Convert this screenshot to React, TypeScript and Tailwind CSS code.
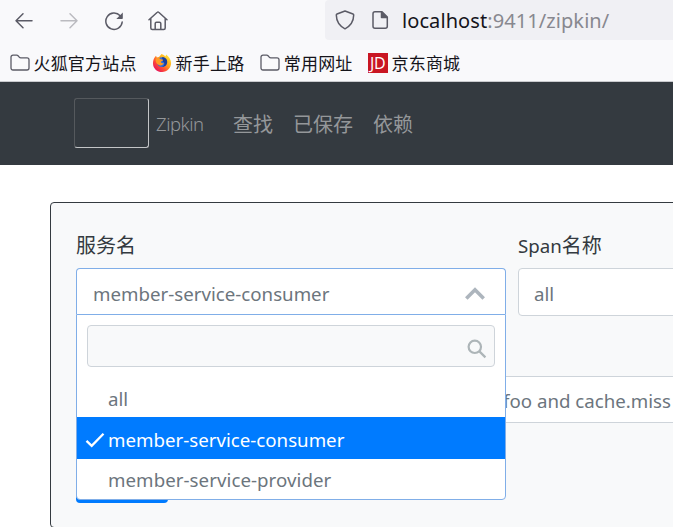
import type { ReactNode } from "react";

const ui = "font-['Noto_Sans','Noto_Sans_CJK_SC',sans-serif]";

function Folder() {
  return (
    <svg className="h-[18px] w-5 shrink-0" viewBox="0 0 20 18" fill="none" stroke="#5b5b66" strokeWidth="1.3" strokeLinejoin="round">
      <path d="M1 14V3.2C1 2 1.8 1.2 3 1.2h3.6c.7 0 1.200.3 1.700.8l1 1.200c.4.4.8.6 1.400.6h6.300c1.200 0 2 .8 2 2V14c0 1.200-.8 2-2 2H3c-1.200 0-2-.8-2-2Z" />
    </svg>
  );
}

function Firefox() {
  return (
    <svg className="size-5 shrink-0" viewBox="0 0 20 20">
      <defs>
        <linearGradient id="flame" x1="0.9" y1="0.1" x2="0.15" y2="0.9">
          <stop offset="0" stopColor="#ffe83b" />
          <stop offset="0.4" stopColor="#ffa21a" />
          <stop offset="0.7" stopColor="#ff4a35" />
          <stop offset="1" stopColor="#e5155f" />
        </linearGradient>
      </defs>
      <path fill="url(#flame)" d="M2.600 4.600 4 2.800l.8 1.600 2.200-.5 2.500-3c1.600.4 3 1.300 4 2.500l.6-1.900c2.700 1.900 5 5 5 8.600 0 5-4 8.900-9 8.900S1 15.300 1 10.400c0-2.200.5-4.200 1.600-5.800Z" />
      <circle cx="10" cy="9.200" r="4.900" fill="#2d6fdd" />
      <path fill="#1b3f9c" d="M10 4.300c2.800-.8 5.600 1.700 5.200 5.300-.3 2.600-2.600 4.500-5.200 4.400 3.200-1.500 3-4.600.8-5.400Z" />
      <path fill="#ff9a24" d="M3.800 5.400c2-.9 3.800-.5 4.800.8l2.500.5c-.2 1-1.400 1.500-2.200 1.900-.2 1.500 1.300 2 3.100 1.500-1 2.500-4 3-6 1.500-1.800-1.400-2.800-3.800-2.200-6.200Z" />
    </svg>
  );
}

function Bookmark({ icon, children, className = "" }: { icon: ReactNode; children: ReactNode; className?: string }) {
  return (
    <div className={`flex items-center gap-1 whitespace-nowrap ${className}`}>
      {icon}
      <span className="pt-0.5 tracking-[0.18px]">{children}</span>
    </div>
  );
}

function BrowserChrome() {
  return (
    <header className="h-[82px] shrink-0 border-b border-[#c9cace] bg-[#f9f9fb] text-[#15141a]">
      <div className="flex h-10">
        <div className="flex w-[325px] shrink-0 gap-[25px] pt-[11px] pl-[14px]">
          <svg className="size-5" viewBox="0 0 20 20" fill="none" stroke="#5b5b66" strokeWidth="1.500" strokeLinecap="round" strokeLinejoin="round">
            <path d="M18 9.800H2M9 2.800l-7 7 7 7" />
          </svg>
          <svg className="size-5" viewBox="0 0 20 20" fill="none" stroke="#bbbbc0" strokeWidth="1.500" strokeLinecap="round" strokeLinejoin="round">
            <path d="M2 9.800h16M11 2.800l7 7-7 7" />
          </svg>
          <svg className="size-5" viewBox="0 0 20 20" fill="none" stroke="#5b5b66" strokeWidth="1.500" strokeLinecap="round">
            <path d="M16.200 4.800A8.200 8.200 0 1 0 18.200 11" />
            <path fill="#5b5b66" stroke="none" d="M18.800 1.400v5.800c0 .5-.3.8-.8.8h-5.700Z" />
          </svg>
          <svg className="-ml-px size-5" viewBox="0 0 20 20" fill="none" stroke="#5b5b66" strokeWidth="1.500" strokeLinecap="round" strokeLinejoin="round">
            <path d="M1 8.800 9.300 1.200c.4-.4 1-.4 1.400 0L19 8.800M2.800 7.500V17c0 .9.600 1.500 1.500 1.500h11.400c.9 0 1.500-.6 1.500-1.500V7.500M7.200 18.500v-6c0-.8.500-1.300 1.300-1.300h3c.8 0 1.300.5 1.300 1.300v6" />
          </svg>
        </div>
        <div className="flex h-10 flex-1 items-center rounded-l bg-[#f0f0f4] pl-2.5">
          <svg className="size-5 shrink-0" viewBox="0 0 20 20" fill="none" stroke="#5b5b66" strokeWidth="1.500" strokeLinejoin="round">
            <path d="M10 1 18 4c.5.2.7.5.7 1-.1 6-2.700 10.700-8.700 13.800C4 15.700 1.400 11 1.300 5c0-.5.200-.8.700-1Z" />
          </svg>
          <svg className="ml-[15px] size-5 shrink-0" viewBox="0 0 20 20" fill="none" stroke="#5b5b66" strokeWidth="1.500" strokeLinejoin="round">
            <path d="M12 1.800H5c-1.200 0-2 .8-2 2v12.400c0 1.200.8 2 2 2h10.300c1.200 0 2-.8 2-2V7Z" />
            <path d="M11.500 2v5.500H17Z" fill="#5b5b66" />
          </svg>
          <span className="ml-3 pt-0.5 text-[20px] leading-[26px] tracking-[0.080px] whitespace-nowrap">
            localhost<span className="text-[#88888f]">:9411/zipkin/</span>
          </span>
        </div>
      </div>
      <nav className="flex h-[41px] items-center pt-[4px] pl-[9.500px] text-[17px]">
        <Bookmark icon={<Folder />}>火狐官方站点</Bookmark>
        <Bookmark icon={<Firefox />} className="ml-[15px]">新手上路</Bookmark>
        <Bookmark icon={<Folder />} className="ml-[15.500px]">常用网址</Bookmark>
        <Bookmark
          className="ml-[15px]"
          icon={
            <span className="flex size-5 items-center justify-center bg-[#c91623] font-['Open_Sans',sans-serif] text-[16px] leading-5 font-medium tracking-[-0.5px] text-white">
              JD
            </span>
          }
        >
          京东商城
        </Bookmark>
      </nav>
    </header>
  );
}

function NavBar() {
  return (
    <nav className="flex h-[83px] shrink-0 items-center bg-[#343a40] pl-[74px] text-[20px] leading-[30px] text-[#94979a]">
      <div className="mb-0.5 h-[50px] w-[75px] shrink-0 rounded-[3px] border border-t-[#55595d] border-r-[#c3c5c7] border-b-[#c3c5c7] border-l-[#55595d]" />
      <span className="ml-[7px] w-[77px] text-[18.500px] font-light tracking-[-0.5px]">Zipkin</span>
      <div className="flex gap-5 pt-[3px]">
        <span>查找</span>
        <span>已保存</span>
        <span>依赖</span>
      </div>
    </nav>
  );
}

function ServiceMenu() {
  return (
    <div className="absolute top-full -left-px w-[430px] rounded-b border border-[#80aee8] bg-white">
      <div className="mx-2.5 mt-[10px] flex h-[42px] items-center justify-end rounded border border-[#ced4da] bg-[#f8f9fa] pr-[7px]">
        <svg className="mt-[6px] size-5" viewBox="0 0 20 20" fill="none" stroke="#adb5b8" strokeWidth="2.200">
          <circle cx="7.800" cy="7.800" r="6.200" />
          <path d="m12.400 12.400 6 6" />
        </svg>
      </div>
      <ul className="mt-[9px]">
        <li className="flex h-[41px] items-center pt-[5px] pl-[31px]">all</li>
        <li className="flex h-[42px] items-center bg-[#007bff] pt-[4px] pl-2 text-white">
          <svg className="mr-[3px] h-4 w-5" viewBox="0 0 20 16" fill="none" stroke="white" strokeWidth="2.300">
            <path d="m1.500 8.800 5.200 5L18.500 1.800" />
          </svg>
          member-service-consumer
        </li>
        <li className="flex h-[40px] items-center pt-[3px] pl-[31px] tracking-[0.050px]">member-service-provider</li>
      </ul>
    </div>
  );
}

export default function App() {
  return (
    <div className={`flex h-[527px] w-[673px] flex-col overflow-hidden bg-white ${ui}`}>
      <BrowserChrome />
      <NavBar />
      <main className="mt-[37px] ml-[50px] h-[326px] w-[700px] shrink-0 rounded border border-[#343a40] bg-[#f8f9fa] pt-[27px] pl-[25px] text-[18.700px] text-[#6c757d]">
        <div className="flex gap-3">
          <div className="w-[430px] shrink-0">
            <div className="mb-2 h-[30px] pt-px text-[20px] leading-[30px] text-[#343a40]">服务名</div>
            <div className="relative z-10 flex h-[46px] items-center justify-between rounded-t border border-b-0 border-[#80aee8] bg-white pt-[5px] pr-5 pl-4">
              <span>member-service-consumer</span>
              <svg className="h-5 w-5" viewBox="0 0 20 20" fill="none" stroke="#adb5bd" strokeWidth="3.600">
                <path d="m1.300 14.500 8.700-8.700 8.700 8.700" />
              </svg>
              <ServiceMenu />
            </div>
          </div>
          <div className="w-[250px] shrink-0">
            <div className="mb-2 h-[30px] pt-px text-[20px] leading-[30px] text-[#343a40]">
              <span className="text-[18.700px]">Span</span>名称
            </div>
            <div className="flex h-12 items-center rounded border border-[#ced4da] bg-white pt-1 pl-[15px]">all</div>
          </div>
        </div>
        <div className="mt-[60px] flex h-[47px] w-[674px] items-center border border-[#ced4da] bg-white pt-[3px] pl-[426px] whitespace-nowrap">
          foo and cache.miss
        </div>
        <div className="mt-8 h-12 w-[92px] rounded bg-[#007bff]" />
      </main>
    </div>
  );
}
